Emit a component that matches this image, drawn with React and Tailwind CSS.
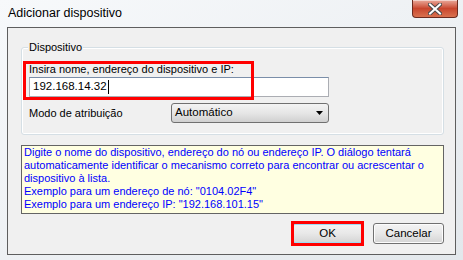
import React from 'react';

const ui = { fontFamily: '"Liberation Sans", Arial, sans-serif' };

function CloseButton() {
  return (
    <div className="w-[46px] h-[18px] mr-[5px] rounded-b-[4px] border border-t-0 border-[#6b2a1e] bg-gradient-to-b from-[#e9a99b] via-[#c8452d] to-[#d9714f] flex items-center justify-center shadow-[inset_0_1px_0_rgba(255,255,255,0.5)]">
      <svg width="14" height="12" viewBox="0 0 14 12">
        <path
          d="M2 1.5 L12 10.5 M12 1.5 L2 10.5"
          stroke="#4a4a4a"
          strokeWidth="4"
          strokeLinecap="square"
        />
        <path
          d="M2 1.5 L12 10.5 M12 1.5 L2 10.5"
          stroke="#ffffff"
          strokeWidth="2"
          strokeLinecap="square"
        />
      </svg>
    </div>
  );
}

function WinButton({ children, focused }) {
  return (
    <button
      className={`w-[71px] h-[21px] rounded-[3px] border text-[11.5px] text-black flex items-center justify-center bg-gradient-to-b from-[#f4f4f4] via-[#e8e8e8] to-[#d4d4d4] ${
        focused
          ? 'border-[#3c7fb1] shadow-[inset_0_0_0_1px_#9fdcf5]'
          : 'border-[#707070] shadow-[inset_0_0_0_1px_#fcfcfc]'
      }`}
      style={ui}
    >
      {children}
    </button>
  );
}

export default function App() {
  return (
    <div
      className="w-[463px] h-[260px] overflow-hidden bg-gradient-to-br from-[#f7f9fb] via-[#eef1f4] to-[#e3e8ec] flex flex-col"
      style={ui}
    >
      {/* Title bar */}
      <div className="h-[27px] flex justify-between items-start">
        <div className="pl-[8px] pt-[5px] text-[12.5px] text-black leading-[16px]">
          Adicionar dispositivo
        </div>
        <CloseButton />
      </div>

      {/* Client area */}
      <div className="mx-[7px] h-[228px] border border-[#5e5e5e] bg-[#f0f0f0] flex flex-col text-[11px] text-black">
        {/* Group box */}
        <div className="mt-[19px] ml-[13px] mr-[11px] h-[88px] rounded-[3px] border border-[#d5dfe5] shadow-[inset_0_0_0_1px_#ffffff] flex flex-col relative">
          <div className="-mt-[8px] ml-[6px] px-[1px] w-fit h-[15px] leading-[15px] bg-[#f0f0f0]">
            Dispositivo
          </div>
          <div className="mt-[7px] ml-[7px] h-[15px] leading-[15px]">
            Insira nome, endereço do dispositivo e IP:
          </div>
          <div className="ml-[7px] w-[300px] h-[20px] border border-[#abadb3] border-t-[#7a8ea9] bg-white flex items-center pl-[3px] text-[11.5px]">
            <span>192.168.14.32</span>
            <span className="w-px h-[14px] bg-black ml-[1px]" />
          </div>
          <div className="mt-[6px] ml-[7px] flex items-center">
            <span className="w-[142px]">Modo de atribuição</span>
            <div className="w-[158px] h-[20px] rounded-[3px] border border-[#707070] bg-gradient-to-b from-[#f3f3f3] via-[#e6e6e6] to-[#d0d0d0] flex items-center justify-between pl-[3px] pr-[5px] text-[11.5px]">
              <span>Automático</span>
              <svg width="7" height="4" viewBox="0 0 7 4">
                <path d="M0 0 H7 L3.5 4 Z" fill="#000" />
              </svg>
            </div>
          </div>
          {/* highlight annotation */}
          <div className="absolute left-[1px] top-[13px] w-[231px] h-[39px] border-[3px] border-[#ff0000] pointer-events-none" />
        </div>

        {/* Info box */}
        <div className="mt-[10px] ml-[13px] mr-[11px] h-[69px] border border-[#646464] bg-[#ffffe1] pl-[2px] text-[#0000ff] leading-[13px]">
          <div>
            Digite o nome do dispositivo, endereço do nó ou endereço IP. O diálogo tentará
            automaticamente identificar o mecanismo correto para encontrar ou acrescentar o
            dispositivo à lista.
          </div>
          <div>Exemplo para um endereço de nó: "0104.02F4"</div>
          <div>Exemplo para um endereço IP: "192.168.101.15"</div>
        </div>

        {/* Buttons */}
        <div className="mt-[9px] mr-[11px] flex justify-end gap-[10px]">
          <div className="relative">
            <WinButton focused>OK</WinButton>
            <div className="absolute -left-[1px] -top-[2px] -right-[1px] -bottom-[2px] border-[3px] border-[#ff0000] pointer-events-none" />
          </div>
          <WinButton>Cancelar</WinButton>
        </div>
      </div>
    </div>
  );
}
